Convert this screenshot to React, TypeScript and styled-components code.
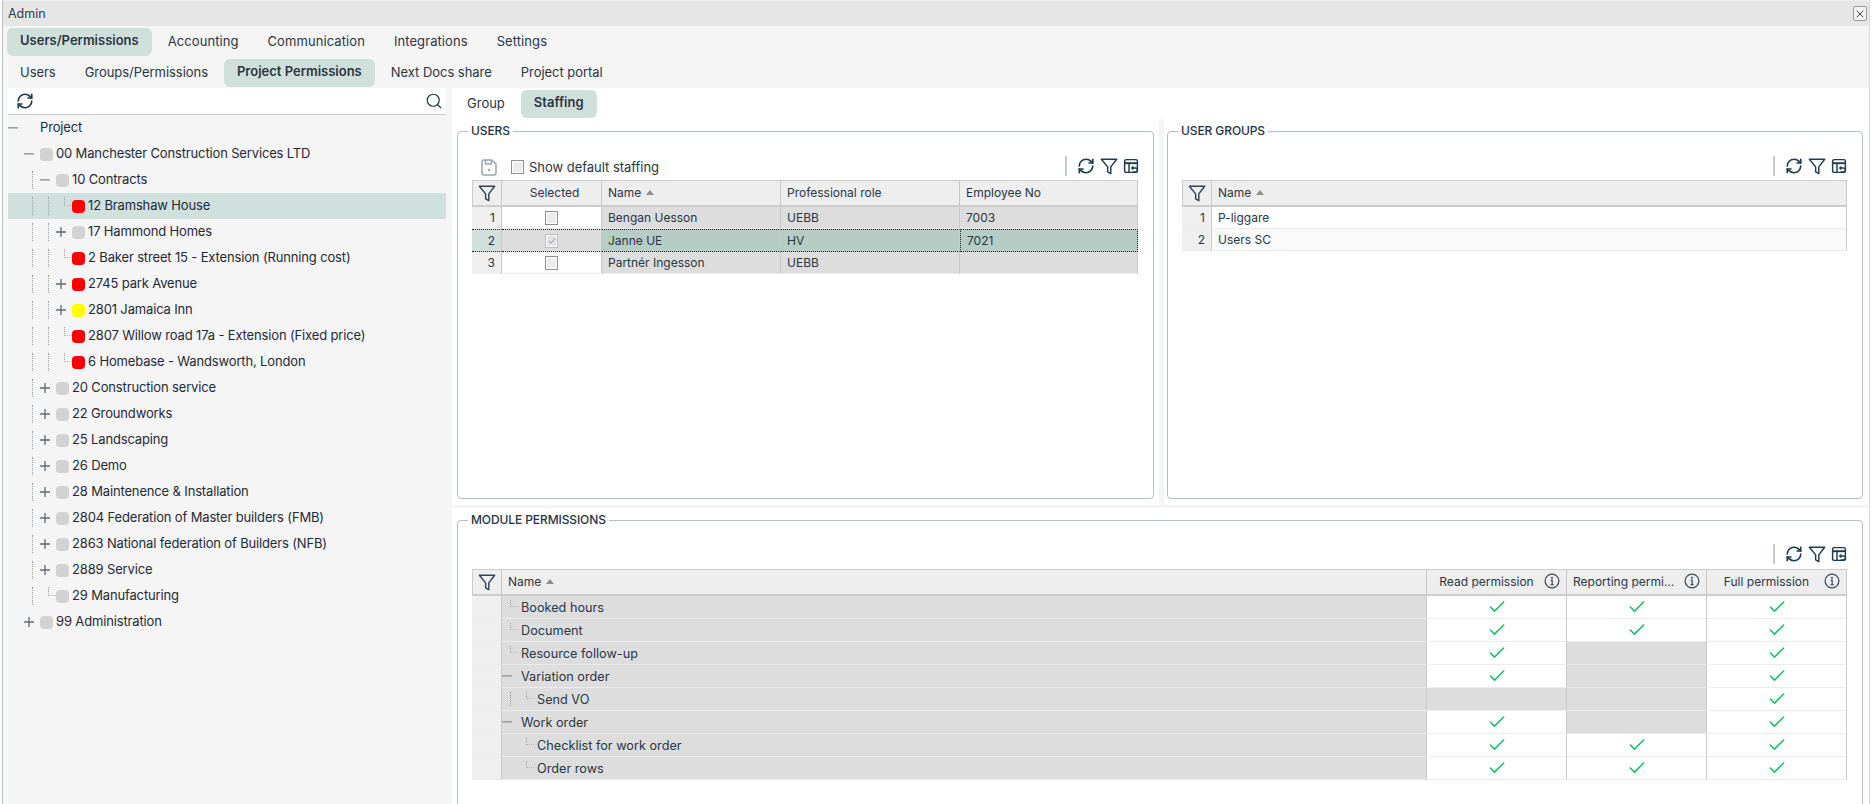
import React from "react";
import styled, { createGlobalStyle } from "styled-components";
import { Check, RefreshCw, Search, X } from "lucide-react";

const Global = createGlobalStyle`
  html, body { margin: 0; padding: 0; background: #fff; }
  body { font-family: Inter, "Noto Sans", "Liberation Sans", sans-serif; color: #1f2a37; overflow: hidden; }
  * { box-sizing: border-box; }
`;

const Window = styled.div`
  margin-left: 2px;
  width: 1868px;
  height: 804px;
  overflow: hidden;
  display: flex;
  flex-direction: column;
  border-left: 1px solid #b9c0c0;
  border-right: 1px solid #d8d8d8;
  border-top: 1px solid #eee;
  background: #f5f5f5;
`;
const TitleBar = styled.div`
  height: 25px;
  flex: none;
  display: flex;
  align-items: center;
  justify-content: space-between;
  padding: 0 2px 0 5px;
  background: #e6e6e6;
  font-size: 12.5px;
  color: #2f3a46;
`;
const CloseButton = styled.button`
  width: 14px;
  height: 15px;
  padding: 0;
  display: flex;
  align-items: center;
  justify-content: center;
  background: #f2f2f2;
  border: 1px solid #9a9a9a;
  border-radius: 2px;
  color: #444;
`;
const TabRow = styled.div<{ $h: number; $white?: boolean; $spacing?: string }>`
  height: ${(p) => p.$h}px;
  flex: none;
  display: flex;
  align-items: center;
  gap: 3px;
  padding-left: ${(p) => (p.$white ? 2 : 4)}px;
  background: ${(p) => (p.$white ? "#fff" : "#f5f5f5")};
  letter-spacing: ${(p) => p.$spacing ?? "0"};
`;
const Tab = styled.div<{ $active?: boolean }>`
  height: 28px;
  padding: ${(p) => (p.$active ? "0 13px 3px" : "0 13px 1px")};
  display: flex;
  align-items: center;
  border-radius: 6px;
  background: ${(p) => (p.$active ? "#cfe0db" : "transparent")};
  font-size: 13px;
  font-weight: ${(p) => (p.$active ? 600 : 400)};
  ${(p) => (p.$active ? "letter-spacing: 0;" : "")}
  color: #2a3644;
  white-space: nowrap;
`;
const Body = styled.div`
  flex: 1;
  min-height: 0;
  display: flex;
`;
const LeftPanel = styled.div`
  margin-left: 5px;
  width: 438px;
  flex: none;
  display: flex;
  flex-direction: column;
  background: #f5f5f5;
`;
const SearchBar = styled.div`
  height: 27px;
  flex: none;
  display: flex;
  align-items: center;
  justify-content: space-between;
  padding: 0 3px 0 8px;
  background: #fff;
  border-bottom: 1px solid #c8c8c8;
  color: #1f3a4d;
`;
const TreeRow = styled.div<{ $selected?: boolean }>`
  height: 26px;
  display: flex;
  align-items: center;
  background: ${(p) => (p.$selected ? "#d0e0dc" : "transparent")};
  font-size: 13px;
  letter-spacing: -0.15px;
  color: #1f2a37;
  white-space: nowrap;
`;
const TreeLabel = styled.span`
  padding-bottom: 2px;
`;
const Spacer = styled.span<{ $w: number }>`
  width: ${(p) => p.$w}px;
  flex: none;
`;
const Guide = styled.span`
  width: 8px;
  margin: 4px 0 4px 8px;
  flex: none;
  align-self: stretch;
  border-left: 1px dotted #9c9c9c;
`;
const Connector = styled.span`
  width: 16px;
  flex: none;
  align-self: flex-start;
  height: 50%;
  position: relative;
  &::before {
    content: "";
    position: absolute;
    left: 8px;
    top: 4px;
    width: 7px;
    bottom: 0;
    border-left: 1px dotted #9c9c9c;
    border-bottom: 1px dotted #b8b8b8;
  }
`;
const Expander = styled.span`
  width: 16px;
  flex: none;
  display: flex;
  align-items: center;
`;
const Swatch = styled.span<{ $color: string }>`
  width: 13px;
  height: 13px;
  flex: none;
  border-radius: 4px;
  background: ${(p) => p.$color};
  margin-right: 3px;
`;
const RightPanel = styled.div`
  flex: 1;
  min-width: 0;
  margin-left: 6px;
  display: flex;
  flex-direction: column;
  background: #fff;
`;
const TopRegion = styled.div`
  height: 386px;
  flex: none;
  display: flex;
  background: #fff;
`;
const Pane = styled.div<{ $w?: number; $pad: string }>`
  ${(p) => (p.$w ? `width: ${p.$w}px; flex: none;` : "flex: 1; min-width: 0;")}
  padding: ${(p) => p.$pad};
`;
const VSplit = styled.div`
  width: 5px;
  flex: none;
  background: #f5f5f5;
`;
const HSplit = styled.div`
  height: 3px;
  flex: none;
  background: #f5f5f5;
`;
const BottomRegion = styled.div`
  flex: 1;
  min-height: 0;
  overflow: hidden;
  padding: 5px 6px 0 5px;
`;
const Group = styled.fieldset<{ $h: number }>`
  margin: 0;
  min-width: 0;
  height: ${(p) => p.$h}px;
  padding: 0 14px;
  border: 1px solid #b4bfc0;
  border-radius: 4px;
`;
const Legend = styled.legend`
  margin-left: -4px;
  padding: 0 3px;
  font-size: 12px;
  line-height: 14px;
  font-weight: 500;
  letter-spacing: -0.1px;
  color: #1f3347;
  text-transform: uppercase;
`;
const Toolbar = styled.div<{ $pb?: number }>`
  height: 42px;
  display: flex;
  align-items: flex-end;
  padding-bottom: ${(p) => p.$pb ?? 4}px;
  color: #1f3a4d;
`;
const ToolLeft = styled.div`
  flex: 1;
  display: flex;
  align-items: center;
  padding: 2px 0 0 9px;
  height: 20px;
  font-size: 13px;
  color: #2a3644;
`;
const ToolRight = styled.div<{ $mr: number }>`
  display: flex;
  align-items: center;
  height: 20px;
  gap: 5px;
  margin-right: ${(p) => p.$mr}px;
`;
const ToolDivider = styled.span`
  width: 2px;
  height: 20px;
  background: #c4c8c8;
  margin-right: 5px;
`;
const ToolLabel = styled.span`
  margin-left: 5px;
  letter-spacing: -0.03px;
`;
const Box = styled.span<{ $muted?: boolean }>`
  width: 13px;
  height: 14px;
  display: inline-flex;
  align-items: center;
  justify-content: center;
  vertical-align: middle;
  border: 1px solid ${(p) => (p.$muted ? "#bcbcbc" : "#8f8f8f")};
  background: ${(p) => (p.$muted ? "#e4e4e4" : "#ececec")};
  box-shadow: inset 0 0 0 1px #fff;
  color: #9aa6c4;
`;
const GridTable = styled.table<{ $w: number }>`
  width: ${(p) => p.$w}px;
  table-layout: fixed;
  border-collapse: separate;
  border-spacing: 0;
  font-size: 12px;
  color: #2a3644;
`;
const Head = styled.th<{ $center?: boolean }>`
  height: 27px;
  padding: 0 0 2px 6px;
  background: #eeeeee;
  border-top: 1px solid #cccccc;
  border-bottom: 2px solid #cccccc;
  border-right: 1px solid #c8c8c8;
  font-weight: 400;
  font-size: 12px;
  text-align: ${(p) => (p.$center ? "center" : "left")};
  white-space: nowrap;
  overflow: hidden;
`;
const FilterHead = styled(Head)`
  padding: 2px 0 0;
  border-left: 1px solid #cccccc;
  text-align: center;
  color: #2f4356;
`;
const HeadInner = styled.div`
  display: flex;
  align-items: center;
  justify-content: space-between;
  padding-right: 6px;
`;
const HeadText = styled.span`
  flex: 1;
  min-width: 0;
  text-align: center;
  overflow: hidden;
  text-overflow: ellipsis;
`;
const SortMark = styled.span`
  display: inline-block;
  margin-left: 5px;
  vertical-align: 2px;
  border-left: 4px solid transparent;
  border-right: 4px solid transparent;
  border-bottom: 5px solid #8d8d8d;
`;
const Cell = styled.td<{ $bg?: string; $h?: number; $current?: boolean; $focus?: boolean; $flush?: boolean }>`
  height: ${(p) => p.$h ?? 22}px;
  padding: 0 0 0 ${(p) => (p.$flush ? 0 : 6)}px;
  font-size: 12px;
  background: ${(p) => p.$bg ?? "#fff"};
  border-right: 1px solid #c8c8c8;
  border-top: ${(p) => (p.$current ? "1px dotted #222" : "none")};
  border-bottom: ${(p) => (p.$current ? "1px dotted #222" : "1px solid #ececec")};
  ${(p) => (p.$focus ? "border-left: 1px dotted #222; border-right: 1px dotted #222;" : "")}
  white-space: nowrap;
`;
const NumCell = styled(Cell)`
  padding: 0 6px 0 0;
  text-align: right;
`;
const CenterCell = styled(Cell)`
  padding: 0;
  text-align: center;
  vertical-align: middle;
`;
const NameRow = styled.div`
  height: 22px;
  display: flex;
  align-items: center;
`;
const NameText = styled.span`
  margin-left: 3px;
  font-size: 12.7px;
`;
const CheckMark = styled(Check)`
  display: block;
  margin: 0 auto;
  color: #1dbf6b;
`;
const InfoWrap = styled.span`
  flex: none;
  display: flex;
  margin-left: 4px;
  color: #3a4a5c;
`;

const Funnel = ({ size = 16 }: { size?: number }) => (
  <svg width={size} height={size} viewBox="0 0 20 20" fill="none" stroke="currentColor" strokeWidth="1.6" strokeLinejoin="round">
    <path d="M1.5 2.5H18.5L12 11V18.5L8.5 16.5V11Z" />
  </svg>
);
const ColumnReset = () => (
  <svg width="16" height="16" viewBox="0 0 20 20" fill="none" stroke="currentColor" strokeWidth="1.8">
    <rect x="2" y="2" width="16" height="16" rx="2" />
    <path d="M2 6.5H18" strokeWidth="2.4" />
    <path d="M7.5 7V18" />
    <path d="M11 12.5H15.5a2.5 2.5 0 0 1 0 5H12" />
    <path d="M13 10.5L11 12.5L13 14.5" />
  </svg>
);
const SaveIcon = () => (
  <svg width="16" height="17" viewBox="0 0 16 17" fill="none" stroke="#9aa4ae" strokeWidth="1.5" strokeLinejoin="round">
    <path d="M3 1H11L15 5V14a2 2 0 0 1-2 2H3a2 2 0 0 1-2-2V3a2 2 0 0 1 2-2Z" />
    <path d="M4.5 1V5H10.5V1" />
    <circle cx="8" cy="11" r="1.2" fill="#9aa4ae" stroke="none" />
  </svg>
);
const InfoIcon = () => (
  <svg width="16" height="16" viewBox="0 0 20 20" fill="none" stroke="currentColor" strokeWidth="1.6">
    <circle cx="10" cy="10" r="8.6" />
    <path d="M8.3 9H10.2V14.5M8.3 14.5H12" />
    <circle cx="10" cy="6" r="1.2" fill="currentColor" stroke="none" />
  </svg>
);
const Minus = () => (
  <svg width="10" height="10" viewBox="0 0 10 10">
    <rect x="0" y="4" width="10" height="1.6" fill="#9aa1a8" />
  </svg>
);
const Plus = () => (
  <svg width="10" height="10" viewBox="0 0 10 10">
    <path d="M0 5H10M5 0V10" stroke="#5f6872" strokeWidth="1.3" />
  </svg>
);

type TreeItem = {
  guides: number[]; // 0 = empty indent, 1 = dotted guide
  icon: "minus" | "plus" | "leaf";
  color?: string;
  label: string;
  selected?: boolean;
};
const G = "#d2d2d2";
const R = "#ff0000";
const Y = "#ffff00";
const treeData: TreeItem[] = [
  { guides: [], icon: "minus", label: "Project" },
  { guides: [0], icon: "minus", color: G, label: "00 Manchester Construction Services LTD" },
  { guides: [0, 1], icon: "minus", color: G, label: "10 Contracts" },
  { guides: [0, 1, 1], icon: "leaf", color: R, label: "12 Bramshaw House", selected: true },
  { guides: [0, 1, 1], icon: "plus", color: G, label: "17 Hammond Homes" },
  { guides: [0, 1, 1], icon: "leaf", color: R, label: "2 Baker street 15 - Extension (Running cost)" },
  { guides: [0, 1, 1], icon: "plus", color: R, label: "2745 park Avenue" },
  { guides: [0, 1, 1], icon: "plus", color: Y, label: "2801 Jamaica Inn" },
  { guides: [0, 1, 1], icon: "leaf", color: R, label: "2807 Willow road 17a - Extension (Fixed price)" },
  { guides: [0, 1, 1], icon: "leaf", color: R, label: "6 Homebase - Wandsworth, London" },
  { guides: [0, 1], icon: "plus", color: G, label: "20 Construction service" },
  { guides: [0, 1], icon: "plus", color: G, label: "22 Groundworks" },
  { guides: [0, 1], icon: "plus", color: G, label: "25 Landscaping" },
  { guides: [0, 1], icon: "plus", color: G, label: "26 Demo" },
  { guides: [0, 1], icon: "plus", color: G, label: "28 Maintenence & Installation" },
  { guides: [0, 1], icon: "plus", color: G, label: "2804 Federation of Master builders (FMB)" },
  { guides: [0, 1], icon: "plus", color: G, label: "2863 National federation of Builders (NFB)" },
  { guides: [0, 1], icon: "plus", color: G, label: "2889 Service" },
  { guides: [0, 1], icon: "leaf", color: G, label: "29 Manufacturing" },
  { guides: [0], icon: "plus", color: G, label: "99 Administration" },
];

const TreeNode = ({ item }: { item: TreeItem }) => (
  <TreeRow $selected={item.selected}>
    {item.guides.map((g, i) => (g ? <Guide key={i} /> : <Spacer key={i} $w={16} />))}
    {item.icon === "leaf" ? (
      <Connector />
    ) : (
      <Expander>{item.icon === "minus" ? <Minus /> : <Plus />}</Expander>
    )}
    {item.color ? <Swatch $color={item.color} /> : <Spacer $w={16} />}
    <TreeLabel>{item.label}</TreeLabel>
  </TreeRow>
);

const Tools = ({ mr }: { mr: number }) => (
  <ToolRight $mr={mr}>
    <ToolDivider />
    <RefreshCw size={18} strokeWidth={2.2} />
    <Funnel size={18} />
    <ColumnReset />
  </ToolRight>
);

const Tickbox = ({ on }: { on?: boolean }) => (
  <Box $muted={on}>{on ? <Check size={10} strokeWidth={2.5} /> : null}</Box>
);

const users = [
  { n: 1, name: "Bengan Uesson", role: "UEBB", no: "7003" },
  { n: 2, name: "Janne UE", role: "HV", no: "7021", on: true },
  { n: 3, name: "Partnér Ingesson", role: "UEBB", no: "" },
];

type Mod = { name: string; level: 1 | 2; kind: "leaf" | "minus"; guide?: boolean; read: boolean; rep: boolean };
const modules: Mod[] = [
  { name: "Booked hours", level: 1, kind: "leaf", read: true, rep: true },
  { name: "Document", level: 1, kind: "leaf", read: true, rep: true },
  { name: "Resource follow-up", level: 1, kind: "leaf", read: true, rep: false },
  { name: "Variation order", level: 1, kind: "minus", read: true, rep: false },
  { name: "Send VO", level: 2, kind: "leaf", guide: true, read: false, rep: false },
  { name: "Work order", level: 1, kind: "minus", read: true, rep: false },
  { name: "Checklist for work order", level: 2, kind: "leaf", read: true, rep: true },
  { name: "Order rows", level: 2, kind: "leaf", read: true, rep: true },
];

const Perm = ({ on }: { on: boolean }) => (
  <CenterCell $h={23} $bg={on ? "#fff" : "#dddddd"}>
    {on ? <CheckMark size={20} strokeWidth={1.9} /> : null}
  </CenterCell>
);

export default function App() {
  return (
    <>
      <Global />
      <Window>
        <TitleBar>
          <span>Admin</span>
          <CloseButton aria-label="Close">
            <X size={12} strokeWidth={2} />
          </CloseButton>
        </TitleBar>
        <TabRow $h={31} $spacing="0.08px">
          <Tab $active>Users/Permissions</Tab>
          <Tab>Accounting</Tab>
          <Tab>Communication</Tab>
          <Tab>Integrations</Tab>
          <Tab>Settings</Tab>
        </TabRow>
        <TabRow $h={31} $spacing="-0.04px">
          <Tab>Users</Tab>
          <Tab>Groups/Permissions</Tab>
          <Tab $active>Project Permissions</Tab>
          <Tab>Next Docs share</Tab>
          <Tab>Project portal</Tab>
        </TabRow>
        <Body>
          <LeftPanel>
            <SearchBar>
              <RefreshCw size={18} strokeWidth={2.2} />
              <Search size={18} strokeWidth={1.6} />
            </SearchBar>
            {treeData.map((t) => (
              <TreeNode key={t.label} item={t} />
            ))}
          </LeftPanel>
          <RightPanel>
            <TabRow $h={31} $white>
              <Tab>Group</Tab>
              <Tab $active>Staffing</Tab>
            </TabRow>
            <TopRegion>
              <Pane $w={707} $pad="5px 5px 0">
                <Group $h={375}>
                  <Legend>Users</Legend>
                  <Toolbar>
                    <ToolLeft>
                      <SaveIcon />
                      <Spacer $w={14} />
                      <Tickbox />
                      <ToolLabel>Show default staffing</ToolLabel>
                    </ToolLeft>
                    <Tools mr={0} />
                  </Toolbar>
                  <GridTable $w={666}>
                    <colgroup>
                      <col width={30} />
                      <col width={100} />
                      <col width={179} />
                      <col width={179} />
                      <col width={178} />
                    </colgroup>
                    <thead>
                      <tr>
                        <FilterHead><Funnel size={18} /></FilterHead>
                        <Head $center>Selected</Head>
                        <Head>Name<SortMark /></Head>
                        <Head>Professional role</Head>
                        <Head>Employee No</Head>
                      </tr>
                    </thead>
                    <tbody>
                      {users.map((u) => {
                        const h = u.on ? 23 : 22;
                        return (
                          <tr key={u.n}>
                            <NumCell $h={h} $bg={u.on ? "#d0e0dc" : "#efefef"} $current={u.on}>{u.n}</NumCell>
                            <CenterCell $h={h} $bg={u.on ? "#dddddd" : "#fff"} $current={u.on}><Tickbox on={u.on} /></CenterCell>
                            <Cell $h={h} $bg={u.on ? "#b6cdc6" : "#dddddd"} $current={u.on}>{u.name}</Cell>
                            <Cell $h={h} $bg={u.on ? "#b6cdc6" : "#dddddd"} $current={u.on}>{u.role}</Cell>
                            <Cell $h={h} $bg={u.on ? "#b6cdc6" : "#dddddd"} $current={u.on} $focus={u.on}>{u.no}</Cell>
                          </tr>
                        );
                      })}
                    </tbody>
                  </GridTable>
                </Group>
              </Pane>
              <VSplit />
              <Pane $pad="5px 6px 0 3px">
                <Group $h={375}>
                  <Legend>User groups</Legend>
                  <Toolbar>
                    <ToolLeft />
                    <Tools mr={1} />
                  </Toolbar>
                  <GridTable $w={665}>
                    <colgroup>
                      <col width={30} />
                      <col width={635} />
                    </colgroup>
                    <thead>
                      <tr>
                        <FilterHead><Funnel size={18} /></FilterHead>
                        <Head>Name<SortMark /></Head>
                      </tr>
                    </thead>
                    <tbody>
                      <tr>
                        <NumCell $bg="#efefef">1</NumCell>
                        <Cell>P-liggare</Cell>
                      </tr>
                      <tr>
                        <NumCell $bg="#efefef">2</NumCell>
                        <Cell $bg="#fafafa">Users SC</Cell>
                      </tr>
                    </tbody>
                  </GridTable>
                </Group>
              </Pane>
            </TopRegion>
            <HSplit />
            <BottomRegion>
              <Group $h={330}>
                <Legend>Module permissions</Legend>
                <Toolbar $pb={5}>
                  <ToolLeft />
                  <Tools mr={1} />
                </Toolbar>
                <GridTable $w={1375}>
                  <colgroup>
                    <col width={30} />
                    <col width={925} />
                    <col width={140} />
                    <col width={140} />
                    <col width={140} />
                  </colgroup>
                  <thead>
                    <tr>
                      <FilterHead><Funnel size={18} /></FilterHead>
                      <Head>Name<SortMark /></Head>
                      <Head><HeadInner><HeadText>Read permission</HeadText><InfoWrap><InfoIcon /></InfoWrap></HeadInner></Head>
                      <Head><HeadInner><HeadText>Reporting permission</HeadText><InfoWrap><InfoIcon /></InfoWrap></HeadInner></Head>
                      <Head><HeadInner><HeadText>Full permission</HeadText><InfoWrap><InfoIcon /></InfoWrap></HeadInner></Head>
                    </tr>
                  </thead>
                  <tbody>
                    {modules.map((m) => (
                      <tr key={m.name}>
                        <NumCell $h={23} $bg="#efefef" />
                        <Cell $h={23} $bg="#dddddd" $flush>
                          <NameRow>
                            {m.level === 2 ? (m.guide ? <Guide /> : <Spacer $w={16} />) : null}
                            {m.kind === "minus" ? <Expander><Minus /></Expander> : <Connector />}
                            <NameText>{m.name}</NameText>
                          </NameRow>
                        </Cell>
                        <Perm on={m.read} />
                        <Perm on={m.rep} />
                        <Perm on={true} />
                      </tr>
                    ))}
                  </tbody>
                </GridTable>
              </Group>
            </BottomRegion>
          </RightPanel>
        </Body>
      </Window>
    </>
  );
}
